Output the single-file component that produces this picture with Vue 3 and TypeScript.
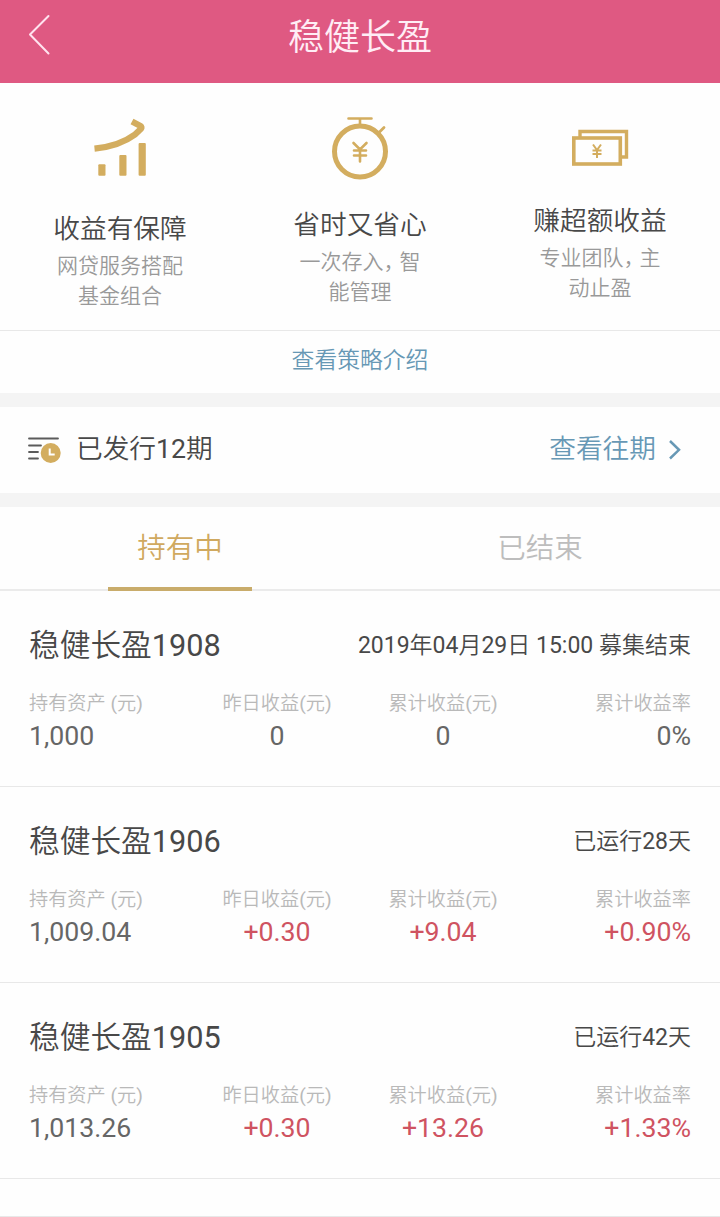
<script setup lang="ts">
import { ref } from 'vue'

interface Product {
  name: string
  status: string
  assets: string
  yesterday: string
  total: string
  rate: string
  gain: boolean
}

const tabs: string[] = ['持有中', '已结束']
const active = ref<number>(0)

const products: Product[] = [
  { name: '稳健长盈1908', status: '2019年04月29日 15:00 募集结束', assets: '1,000', yesterday: '0', total: '0', rate: '0%', gain: false },
  { name: '稳健长盈1906', status: '已运行28天', assets: '1,009.04', yesterday: '+0.30', total: '+9.04', rate: '+0.90%', gain: true },
  { name: '稳健长盈1905', status: '已运行42天', assets: '1,013.26', yesterday: '+0.30', total: '+13.26', rate: '+1.33%', gain: true },
]
</script>

<template>
  <div class="page">
    <header class="header">
      <svg class="back" width="24" height="42" viewBox="0 0 24 42" fill="none" stroke="#ffe3ef" stroke-width="2" stroke-linecap="round" stroke-linejoin="round">
        <path d="M20.500 2 L2 20.500 L20.500 39.500" />
      </svg>
      <h1>稳健长盈</h1>
    </header>

    <section class="features">
      <div class="feature growth">
        <svg width="56" height="64" viewBox="0 0 56 64">
          <path d="M2.500 32.600 C19 31 33 26 43 18.500 L49 12.800 Q50.200 11 48.500 10 L40 5.500" fill="none" stroke="#d3ad5f" stroke-width="6.200" stroke-linejoin="round" />
          <g fill="#d3ad5f">
            <rect x="6.300" y="48.300" width="7.200" height="11.500" rx="1" />
            <rect x="27.300" y="39" width="7.200" height="20.800" rx="1" />
            <rect x="46.600" y="27" width="7.200" height="32.800" rx="1" />
          </g>
        </svg>
        <h2>收益有保障</h2>
        <p>网贷服务搭配<br>基金组合</p>
      </div>
      <div class="feature time">
        <svg width="60" height="64" viewBox="0 0 60 64" fill="none" stroke="#d3ad5f">
          <circle cx="30" cy="35.500" r="25.500" stroke-width="5" />
          <path d="M18.500 2.500 H41.500 M30 2.500 V10" stroke-width="2.600" stroke-linecap="round" />
          <path d="M48.500 17 L54 11.500" stroke-width="2.800" stroke-linecap="round" />
          <path d="M23.500 27 L30 33.500 L36.500 27 M30 33.500 V45.500 M24 34.500 H36 M24 39.500 H36" stroke-width="2.600" stroke-linecap="round" />
        </svg>
        <h2>省时又省心</h2>
        <p>一次存入<span class="comma">，</span>智<br>能管理</p>
      </div>
      <div class="feature profit">
        <svg width="58" height="38" viewBox="0 0 58 38" fill="none" stroke="#d3ad5f">
          <path d="M9 9 V2.500 H55.500 V28 H49" stroke-width="3.400" />
          <rect x="2.800" y="9" width="46.500" height="26" stroke-width="3.600" />
          <path d="M22 15.500 L26 21 L30 15.500 M26 21 V29 M21.500 21.500 H30.500 M21.500 25 H30.500" stroke-width="2" />
        </svg>
        <h2>赚超额收益</h2>
        <p>专业团队<span class="comma">，</span>主<br>动止盈</p>
      </div>
    </section>

    <a class="strategy">查看策略介绍</a>

    <section class="issued">
      <svg width="34" height="28" viewBox="0 0 34 28" fill="none">
        <path d="M2 2.500 H31 M2 9.500 H14 M2 16 H11 M2 22.500 H11" stroke="#5b5b5b" stroke-width="1.800" stroke-linecap="round" />
        <circle cx="23.700" cy="17" r="10" fill="#d3ad5f" />
        <path d="M22.700 12.500 V18.500 H27.700" stroke="#fff" stroke-width="2" />
      </svg>
      <span class="count">已发行12期</span>
      <a class="past">查看往期</a>
      <svg class="arrow" width="14" height="22" viewBox="0 0 14 22" fill="none" stroke="#6798b5" stroke-width="2.500">
        <path d="M2 2 L11 10.800 L2 19.500" />
      </svg>
    </section>

    <nav class="tabs">
      <button v-for="(tab, i) in tabs" :key="tab" :class="{ active: active === i }" @click="active = i">
        <span>{{ tab }}</span>
      </button>
    </nav>

    <article v-for="item in products" :key="item.name" class="product">
      <div class="top">
        <h3>{{ item.name }}</h3>
        <span class="status">{{ item.status }}</span>
      </div>
      <dl :class="{ gain: item.gain }">
        <div class="assets"><dt>持有资产 (元)</dt><dd>{{ item.assets }}</dd></div>
        <div><dt>昨日收益(元)</dt><dd>{{ item.yesterday }}</dd></div>
        <div><dt>累计收益(元)</dt><dd>{{ item.total }}</dd></div>
        <div class="rate"><dt>累计收益率</dt><dd>{{ item.rate }}</dd></div>
      </dl>
    </article>
    <div class="next"></div>
  </div>
</template>

<style>
body { margin: 0; background: #fff; }
</style>

<style scoped>
.page {
  width: 720px;
  height: 1217px;
  overflow: hidden;
  display: flex;
  flex-direction: column;
  background: #fefefe;
  color: #484848;
  font-family: Roboto, "Noto Sans CJK SC DemiLight", "Noto Sans CJK SC Light", "Noto Sans CJK SC", sans-serif;
}
.page > * { flex-shrink: 0; box-sizing: border-box; }
h1, h2, h3, p, dl, dd { margin: 0; font-weight: 400; }
svg { display: block; }
.header {
  height: 83px;
  display: grid;
  grid-template-columns: 120px 1fr 120px;
  background: #df5982;
  color: #ffedf5;
}
.back { margin: 14px 0 0 28px; }
h1 { font-size: 36px; line-height: 77px; text-align: center; }
.features {
  height: 248px;
  display: grid;
  grid-template-columns: repeat(3, 1fr);
  border-bottom: 1px solid #e8e8e8;
}
.feature { display: flex; flex-direction: column; align-items: center; text-align: center; }
.growth { padding-top: 33px; }
.time { padding-top: 33px; }
.profit { padding-top: 46px; }
h2 { font-size: 26.700px; line-height: 36px; }
.growth h2 { margin-top: 31px; }
.time h2 { margin-top: 27px; }
.profit h2 { margin-top: 36px; }
p { margin-top: 4px; font-size: 21px; line-height: 30px; color: #999; }
.comma { letter-spacing: -5px; }
.strategy {
  height: 62px;
  line-height: 59px;
  font-size: 22.800px;
  text-align: center;
  color: #6798b5;
}
.issued {
  height: 114px;
  display: flex;
  align-items: center;
  padding: 0 38px 2px 27px;
  border: solid #f4f4f4;
  border-width: 14px 0 14px;
  line-height: 40px;
  font-size: 26.700px;
}
.issued svg { margin-top: 1px; }
.count { margin-left: 15px; }
.past { margin-left: auto; color: #6798b5; }
.arrow { margin-left: 12px; }
.tabs {
  height: 84px;
  display: grid;
  grid-template-columns: 1fr 1fr;
  border-bottom: 2px solid #ebebeb;
}
button {
  height: 84px;
  padding: 0;
  display: flex;
  justify-content: center;
  border: 0;
  background: none;
  font-family: inherit;
  font-size: 28.500px;
  line-height: 83px;
  color: #bdbdbd;
}
button span { width: 144px; height: 84px; box-sizing: border-box; }
.active span { color: #d0a95f; border-bottom: 4px solid #c9ac6b; }
.product { height: 196px; padding: 33px 29px 0; border-bottom: 1px solid #e8e8e8; }
.top { display: flex; justify-content: space-between; align-items: center; line-height: 44px; }
h3 { font-size: 30.700px; }
.status { font-size: 23px; }
dl { display: grid; grid-template-columns: 165px 166px 166px 165px; margin-top: 21px; text-align: center; }
dt { font-size: 19.200px; line-height: 30px; color: #b9b9b9; }
dd { margin-top: -1px; font-size: 26.700px; line-height: 36px; color: #666; }
.assets { text-align: left; }
.rate { text-align: right; }
.gain div:not(.assets) dd { color: #cf5361; }
.next { height: 38px; border-bottom: 1px solid #e8e8e8; }
</style>
